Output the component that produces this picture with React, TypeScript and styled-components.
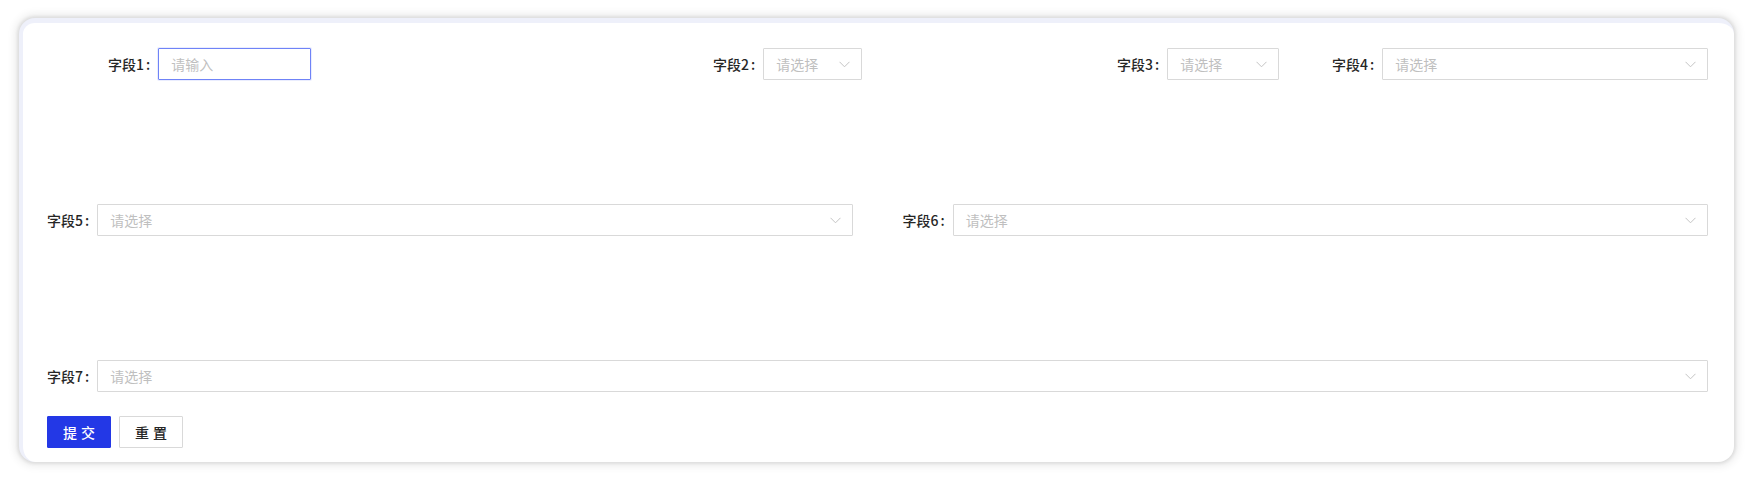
import React from "react";
import styled, { createGlobalStyle } from "styled-components";

const Global = createGlobalStyle`
  html, body { margin: 0; padding: 0; background: #ffffff; }
  body {
    font-family: "Noto Sans CJK SC", "Noto Sans", "Liberation Sans", sans-serif;
    font-size: 14px;
    color: rgba(0, 0, 0, 0.85);
  }
  * { box-sizing: border-box; }
`;

const Page = styled.div`
  padding: 18px 19px 19px 19px;
`;

const Card = styled.div`
  height: 444px;
  background: #ffffff;
  border-radius: 16px;
  box-shadow: 0 0 3px 2px rgba(0, 0, 0, 0.07), 0 0 9px 4px rgba(0, 0, 0, 0.08);
  border-top: 5px solid #eef0fa;
  border-left: 4px solid #eef0fa;
  padding: 25px 26px 14px 24px;
  display: flex;
  flex-direction: column;
`;

const Rows = styled.div`
  display: flex;
  flex-direction: column;
  gap: 124px;
`;

const Row = styled.div<{ $cols?: string }>`
  display: grid;
  grid-template-columns: ${(p) => p.$cols || "1fr"};
  align-items: center;
`;

const Field = styled.div`
  display: flex;
  align-items: center;
  height: 32px;
  min-width: 0;
`;

const Label = styled.label`
  flex: none;
  font-weight: 500;
  font-size: 14px;
  color: #262626;
  white-space: nowrap;
  line-height: 32px;
  &::after {
    content: ":";
    margin: 0 8px 0 2px;
  }
`;

const Control = styled.div<{ $width?: number; $focused?: boolean }>`
  ${(p) => (p.$width ? `width: ${p.$width}px; flex: none;` : "flex: 1; min-width: 0;")}
  height: 32px;
  border: 1px solid ${(p) => (p.$focused ? "#6f83f7" : "#d9d9d9")};
  box-shadow: ${(p) => (p.$focused ? "0 0 0 1px rgba(111, 131, 247, 0.15)" : "none")};
  border-radius: 1px;
  background: #fff;
  display: flex;
  align-items: center;
  justify-content: space-between;
  padding: 0 11px 0 12px;
  color: #bfbfbf;
  font-size: 14px;
`;

const Placeholder = styled.span`
  color: #bfbfbf;
  white-space: nowrap;
`;

const Actions = styled.div`
  display: flex;
  gap: 8px;
  margin-top: 24px;
`;

const Button = styled.button<{ $primary?: boolean }>`
  width: 64px;
  height: 32px;
  font-family: inherit;
  font-size: 14px;
  font-weight: 500;
  letter-spacing: 4px;
  padding: 0 0 0 4px;
  border-radius: 1px;
  cursor: pointer;
  border: 1px solid ${(p) => (p.$primary ? "#2338e6" : "#d9d9d9")};
  background: ${(p) => (p.$primary ? "#2338e6" : "#ffffff")};
  color: ${(p) => (p.$primary ? "#ffffff" : "#262626")};
`;

const Chevron = () => (
  <svg width="11" height="7" viewBox="0 0 11 7" fill="none">
    <polyline points="0.5,0.8 5.5,5.8 10.5,0.8" stroke="#c4c4c4" strokeWidth="1" />
  </svg>
);

const SelectBox = ({ width }: { width?: number }) => (
  <Control $width={width}>
    <Placeholder>请选择</Placeholder>
    <Chevron />
  </Control>
);

export default function App() {
  return (
    <>
      <Global />
      <Page>
        <Card>
          <Rows>
            <Row $cols="61px 202px 403px 150px 254px 164px 51px 1fr">
              <span />
              <Field>
                <Label>字段1</Label>
                <Control $width={153} $focused>
                  <Placeholder>请输入</Placeholder>
                </Control>
              </Field>
              <span />
              <Field>
                <Label>字段2</Label>
                <SelectBox width={99} />
              </Field>
              <span />
              <Field>
                <Label>字段3</Label>
                <SelectBox width={112} />
              </Field>
              <span />
              <Field>
                <Label>字段4</Label>
                <SelectBox />
              </Field>
            </Row>
            <Row $cols="1fr 50px 1fr">
              <Field>
                <Label>字段5</Label>
                <SelectBox />
              </Field>
              <span />
              <Field>
                <Label>字段6</Label>
                <SelectBox />
              </Field>
            </Row>
            <Row>
              <Field>
                <Label>字段7</Label>
                <SelectBox />
              </Field>
            </Row>
          </Rows>
          <Actions>
            <Button $primary>提交</Button>
            <Button>重置</Button>
          </Actions>
        </Card>
      </Page>
    </>
  );
}
